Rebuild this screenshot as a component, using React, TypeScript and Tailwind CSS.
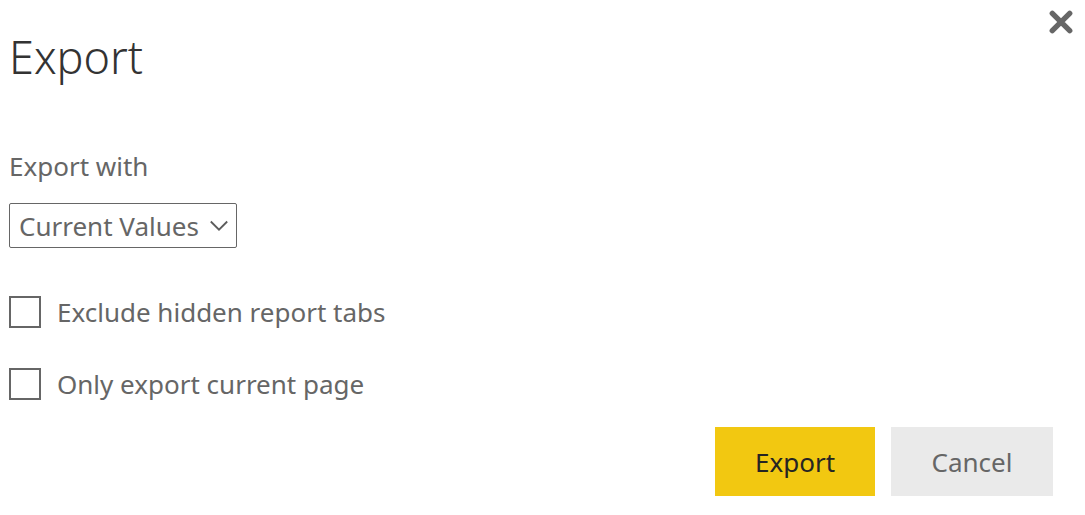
import React, { useState } from "react";

function CheckRow({ label }: { label: string }) {
  return (
    <label className="flex items-center gap-4 text-[26px] leading-10 text-[#666666]">
      <input
        type="checkbox"
        className="size-8 shrink-0 appearance-none border-2 border-[#666666] bg-white checked:bg-[#f2c811]"
      />
      {label}
    </label>
  );
}

export default function App() {
  const [open, setOpen] = useState(true);
  if (!open) return null;
  return (
    <section className="relative bg-white pl-[9px] pr-8 pt-[27px] pb-5 font-['Segoe_UI','Noto_Sans',sans-serif]">
      <button
        type="button"
        aria-label="Close"
        onClick={() => setOpen(false)}
        className="absolute top-2.5 right-3"
      >
        <svg
          viewBox="0 0 24 24"
          className="size-6"
          fill="none"
          stroke="#666666"
          strokeWidth="5.4"
          strokeLinecap="round"
        >
          <path d="M3.3 3.3L20.7 20.7M20.7 3.3L3.3 20.7" />
        </svg>
      </button>
      <h1 className="text-[45px] leading-[60px] font-light text-[#333333]">Export</h1>
      <label htmlFor="values" className="mt-[59px] block text-[26px] leading-10 text-[#666666]">
        Export with
      </label>
      <div className="mt-[17px] grid w-[228px] items-center">
        <select
          id="values"
          className="col-start-1 row-start-1 h-[45px] w-full appearance-none rounded-xs border border-[#666666] bg-white pl-[9px] text-[26px] leading-10 text-[#666666]"
        >
          <option>Current Values</option>
        </select>
        <svg
          viewBox="0 0 18 12"
          className="pointer-events-none col-start-1 row-start-1 mr-[9px] h-3 w-[18px] justify-self-end"
          fill="none"
          stroke="#5c5c5c"
          strokeWidth="1.8"
        >
          <path d="M0.8 1.5L9 9.7L17.2 1.5" />
        </svg>
      </div>
      <div className="mt-11 flex flex-col gap-8">
        <CheckRow label="Exclude hidden report tabs" />
        <CheckRow label="Only export current page" />
      </div>
      <div className="mt-[23px] flex justify-end gap-4 text-[26px] leading-10">
        <button type="button" className="h-[69px] w-40 bg-[#f2c811] text-[#252423]">Export</button>
        <button type="button" className="h-[69px] w-[162px] bg-[#eaeaea] text-[#666666]">Cancel</button>
      </div>
    </section>
  );
}
